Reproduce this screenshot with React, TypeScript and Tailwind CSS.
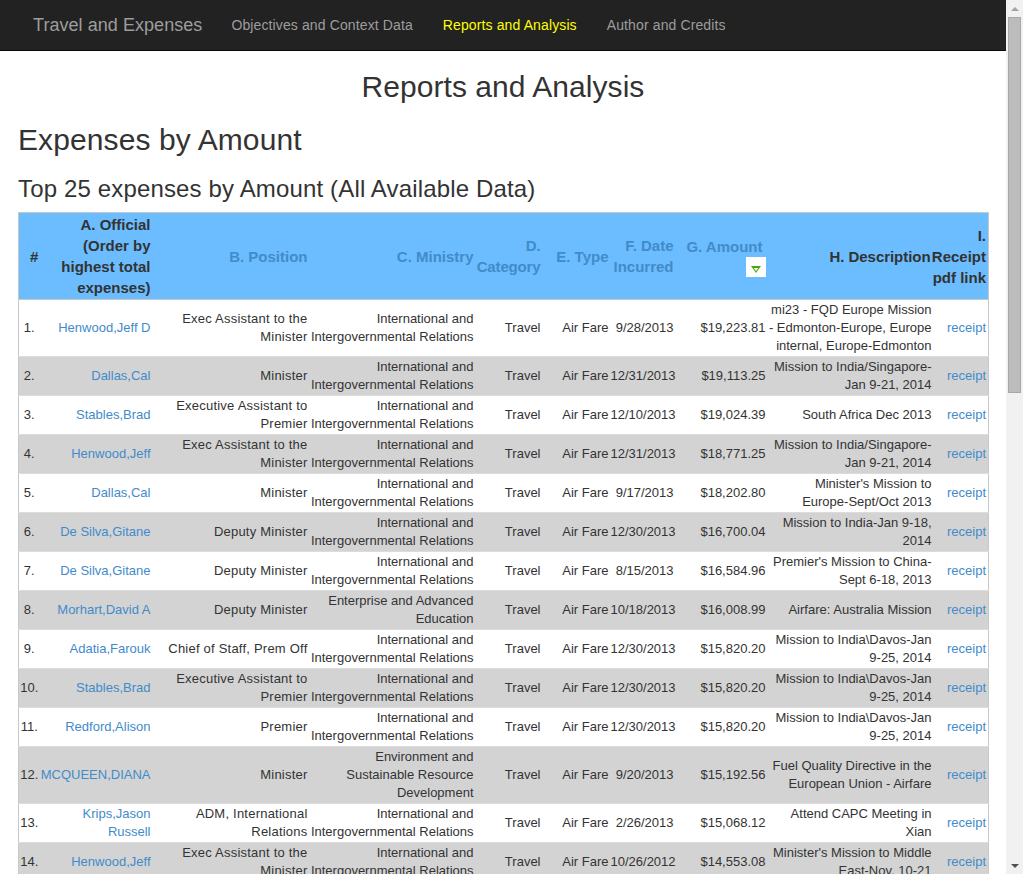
const rows = [
  ["Henwood,Jeff D", "Exec Assistant to the Minister", "International and Intergovernmental Relations", "Air Fare", "9/28/2013", "$19,223.81", "mi23 - FQD Europe Mission - Edmonton-Europe, Europe internal, Europe-Edmonton"],
  ["Dallas,Cal", "Minister", "International and Intergovernmental Relations", "Air Fare", "12/31/2013", "$19,113.25", "Mission to India/Singapore-Jan 9-21, 2014"],
  ["Stables,Brad", "Executive Assistant to Premier", "International and Intergovernmental Relations", "Air Fare", "12/10/2013", "$19,024.39", "South Africa Dec 2013"],
  ["Henwood,Jeff", "Exec Assistant to the Minister", "International and Intergovernmental Relations", "Air Fare", "12/31/2013", "$18,771.25", "Mission to India/Singapore-Jan 9-21, 2014"],
  ["Dallas,Cal", "Minister", "International and Intergovernmental Relations", "Air Fare", "9/17/2013", "$18,202.80", "Minister's Mission to Europe-Sept/Oct 2013"],
  ["De Silva,Gitane", "Deputy Minister", "International and Intergovernmental Relations", "Air Fare", "12/30/2013", "$16,700.04", "Mission to India-Jan 9-18, 2014"],
  ["De Silva,Gitane", "Deputy Minister", "International and Intergovernmental Relations", "Air Fare", "8/15/2013", "$16,584.96", "Premier's Mission to China-Sept 6-18, 2013"],
  ["Morhart,David A", "Deputy Minister", "Enterprise and Advanced Education", "Air Fare", "10/18/2013", "$16,008.99", "Airfare: Australia Mission"],
  ["Adatia,Farouk", "Chief of Staff, Prem Off", "International and Intergovernmental Relations", "Air Fare", "12/30/2013", "$15,820.20", "Mission to India\\Davos-Jan 9-25, 2014"],
  ["Stables,Brad", "Executive Assistant to Premier", "International and Intergovernmental Relations", "Air Fare", "12/30/2013", "$15,820.20", "Mission to India\\Davos-Jan 9-25, 2014"],
  ["Redford,Alison", "Premier", "International and Intergovernmental Relations", "Air Fare", "12/30/2013", "$15,820.20", "Mission to India\\Davos-Jan 9-25, 2014"],
  ["MCQUEEN,DIANA", "Minister", "Environment and Sustainable Resource Development", "Air Fare", "9/20/2013", "$15,192.56", "Fuel Quality Directive in the European Union - Airfare"],
  ["Krips,Jason Russell", "ADM, International Relations", "International and Intergovernmental Relations", "Air Fare", "2/26/2013", "$15,068.12", "Attend CAPC Meeting in Xian"],
  ["Henwood,Jeff", "Exec Assistant to the Minister", "International and Intergovernmental Relations", "Air Fare", "10/26/2012", "$14,553.08", "Minister's Mission to Middle East-Nov. 10-21"],
];

const th = "pl-0 align-middle text-right font-bold";
const td = "pl-0 py-px align-middle text-right";

export default function App() {
  return (
    <div className="flex h-screen overflow-hidden bg-white font-['Liberation_Sans',Arial,sans-serif] text-[13px] leading-[18px] text-[#333]">
      <main className="flex-1 min-w-0 overflow-hidden">
        <nav className="flex h-[51px] items-center border-b border-[#080808] bg-[#222] text-[14px] tracking-[0.12px] text-[#9d9d9d]">
          <span className="ml-[33px] text-[18px] tracking-[0.05px]">Travel and Expenses</span>
          <a className="ml-[29px]">Objectives and Context Data</a>
          <a className="ml-[30px] text-[#ffff00]">Reports and Analysis</a>
          <a className="ml-[30px]">Author and Credits</a>
        </nav>

        <div className="pl-[18px] pr-[18px]">
          <h2 className="mt-[19px] text-center text-[30px] leading-[33px] tracking-[0.05px]">Reports and Analysis</h2>
          <h2 className="mt-[20px] text-[30px] leading-[33px] tracking-[0.1px]">Expenses by Amount</h2>
          <h3 className="mt-[20px] text-[24px] leading-[26px] tracking-[0.15px]">Top 25 expenses by Amount (All Available Data)</h3>

          <table className="mt-[10px] w-[970px] table-fixed border-collapse border border-[#c8c8c8]">
            <colgroup>
              <col className="w-[21px]" />
              <col className="w-[114px]" />
              <col className="w-[157px]" />
              <col className="w-[165px]" />
              <col className="w-[68px]" />
              <col className="w-[67px]" />
              <col className="w-[66px]" />
              <col className="w-[92px]" />
              <col className="w-[163px]" />
              <col className="w-[57px]" />
            </colgroup>
            <thead>
              <tr className="h-[87px] border-b border-[#c8c8c8] bg-[#6bbdff] text-[15px] leading-[21px]">
                <th className="pl-[11px] text-left font-bold">#</th>
                <th className={th + " pr-[3px]"}>A. Official (Order by highest total expenses)</th>
                <th className={th + " pr-[3px] text-[#428bca]"}>B. Position</th>
                <th className={th + " pr-[2px] text-[#428bca]"}>C. Ministry</th>
                <th className={th + " pr-[3px] tracking-[-0.15px] text-[#428bca]"}>D. Category</th>
                <th className={th + " pr-[2px] text-[#428bca]"}>E. Type</th>
                <th className={th + " pr-[3px] text-[#428bca]"}>F. Date Incurred</th>
                <th className={th + " pr-[3px] text-[#428bca]"}>
                  <div className="pr-[3px]">G. Amount</div>
                  <div className="ml-auto flex h-[20px] w-[20px] items-center justify-center bg-white pt-[5px]">
                    <svg width="10" height="7" viewBox="0 0 10 7">
                      <path d="M0 0 H10 L5 7 Z" fill="#4fa30f" />
                      <path d="M2.6 2 H7.4 L5 5.2 Z" fill="#eaf8dc" />
                    </svg>
                  </div>
                </th>
                <th className={th + " pr-[1px] whitespace-nowrap tracking-[-0.05px]"}>H. Description</th>
                <th className="pr-[2px] text-right font-bold">I. Receipt pdf link</th>
              </tr>
            </thead>
            <tbody>
              {rows.map((r, i) => (
                <tr key={i} className={"border-b border-[#dcdcdc] " + (i % 2 ? "bg-[#d3d3d3]" : "bg-white")}>
                  <td className="align-middle text-center whitespace-nowrap">{i + 1}.</td>
                  <td className={td + " pr-[3px] text-[#428bca]"}>{r[0]}</td>
                  <td className={td + " pr-[3px] tracking-[0.22px]"}>{r[1]}</td>
                  <td className={td + " pr-[2px]"}>{r[2]}</td>
                  <td className={td + " pr-[3px]"}>Travel</td>
                  <td className={td + " pr-[2px] whitespace-nowrap"}>{r[3]}</td>
                  <td className={td + " pr-[3px] whitespace-nowrap"}>{r[4]}</td>
                  <td className={td + " pr-[3px] whitespace-nowrap"}>{r[5]}</td>
                  <td className={td}>{r[6]}</td>
                  <td className="pr-[2px] align-middle text-right text-[#428bca]">receipt</td>
                </tr>
              ))}
            </tbody>
          </table>
        </div>
      </main>

      <aside className="flex w-[17px] shrink-0 flex-col bg-[#f1f1f1]">
        <div className="flex h-[17px] items-center justify-center">
          <div className="h-0 w-0 border-x-[4px] border-b-[4px] border-x-transparent border-b-[#a3a3a3]" />
        </div>
        <div className="ml-[2px] h-[376px] w-[13px] border border-[#a8a8a8] bg-[#bcbcbc]" />
        <div className="flex-1" />
        <div className="flex h-[17px] items-center justify-center">
          <div className="h-0 w-0 border-x-[4px] border-t-[4px] border-x-transparent border-t-[#505050]" />
        </div>
      </aside>
    </div>
  );
}
